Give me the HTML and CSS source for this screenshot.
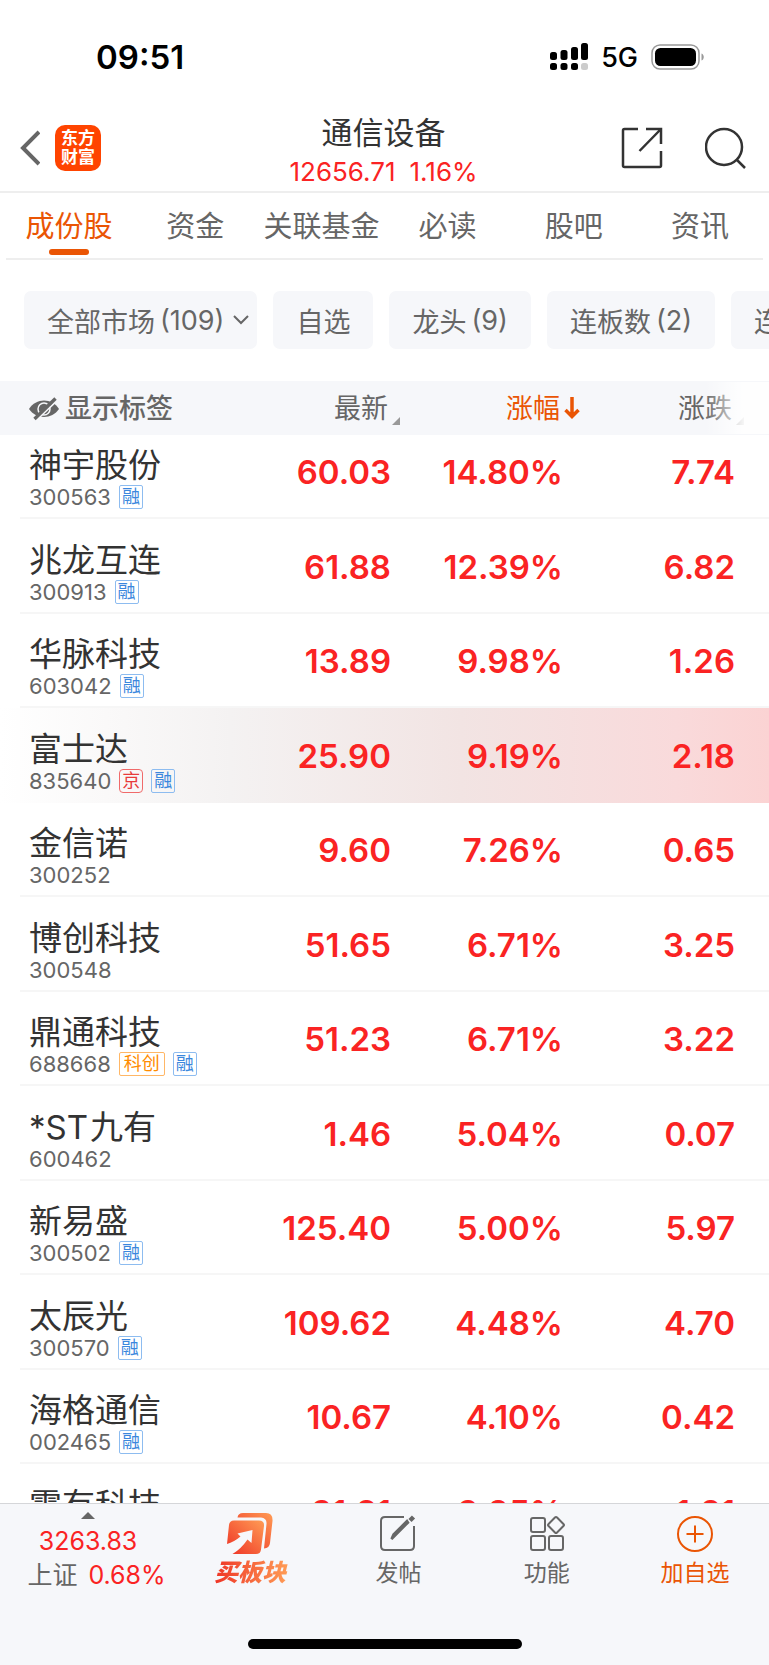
FILE: index.html
```html
<!DOCTYPE html>
<html lang="zh-CN">
<head>
    <meta charset="UTF-8">
    <meta name="viewport" content="width=device-width, initial-scale=1.0">
    <title>通信设备</title>
    <link rel="stylesheet" href="styles.css">
</head>
<body>
    <!-- Status bar -->
    <div class="status-bar">
        <span class="status-time">09:51</span>
        <div class="status-right">
            <svg width="38" height="28" viewBox="0 0 38 28">
                <rect x="0" y="9" width="7" height="8" rx="2.5"/>
                <rect x="10.500" y="7" width="7" height="10" rx="2.5"/>
                <rect x="21" y="4" width="7" height="13" rx="2.5"/>
                <rect x="31" y="0" width="7" height="17" rx="2.5"/>
                <rect x="0" y="20" width="7" height="7" rx="2.5"/>
                <rect x="10.500" y="20" width="7" height="7" rx="2.5"/>
                <rect x="21" y="20" width="7" height="7" rx="2.5"/>
                <rect x="31" y="20" width="7" height="7" rx="2.5" fill="#ccc"/>
            </svg>
            <span class="network">5G</span>
            <svg width="54" height="26" viewBox="0 0 54 26">
                <rect x="1" y="1" width="47" height="24" rx="8" fill="none" stroke="#999" stroke-width="1.500"/>
                <rect x="4" y="4" width="41" height="18" rx="5.500"/>
                <path d="M50.500 9.500c3 1 3 6 0 7z" fill="#999"/>
            </svg>
        </div>
    </div>

    <!-- Title bar -->
    <header class="header">
        <div class="header-left">
            <button class="icon-btn" aria-label="返回">
                <svg width="20" height="36" viewBox="0 0 20 36" fill="none" stroke="#666" stroke-width="4">
                    <path d="M19 2L3 18l16 16"/>
                </svg>
            </button>
            <a class="logo" href="#"><span>东方</span><span>财富</span></a>
        </div>
        <div class="header-title">
            <h1>通信设备</h1>
            <p><span>12656.71</span><span>1.16%</span></p>
        </div>
        <div class="header-right">
            <button class="icon-btn" aria-label="分享">
                <svg width="42" height="42" viewBox="0 0 42 42" fill="none" stroke="#333" stroke-width="2.500">
                    <path d="M17 2H3.500Q2 2 2 3.500V38.500Q2 40 3.500 40H38.500Q40 40 40 38.500V24M25 2H40V17M40 2L18.500 24"/>
                </svg>
            </button>
            <button class="icon-btn" aria-label="搜索">
                <svg width="42" height="42" viewBox="0 0 42 42" fill="none" stroke="#333" stroke-width="2.500">
                    <circle cx="19" cy="20" r="18"/>
                    <path d="M31.500 32.500L40 41"/>
                </svg>
            </button>
        </div>
    </header>

    <!-- Tabs -->
    <nav class="tabs">
        <a class="tab active" href="#">成份股</a>
        <a class="tab" href="#">资金</a>
        <a class="tab" href="#">关联基金</a>
        <a class="tab" href="#">必读</a>
        <a class="tab" href="#">股吧</a>
        <a class="tab" href="#">资讯</a>
    </nav>

    <!-- Filters -->
    <div class="filters">
        <button class="chip chip-menu">全部市场<span>(109)</span>
            <svg width="16" height="10" viewBox="0 0 16 10" fill="none" stroke="#666" stroke-width="2"><path d="M1 1l7 7 7-7"/></svg>
        </button>
        <button class="chip">自选</button>
        <button class="chip">龙头<span>(9)</span></button>
        <button class="chip">连板数<span>(2)</span></button>
        <button class="chip">连板</button>
    </div>

    <!-- Stock list -->
    <main class="list">
        <table class="stocks">
            <thead>
                <tr>
                    <th class="col-name">
                        <button class="label-toggle">
                            <svg width="30" height="24" viewBox="0 0 30 24">
                                <path d="M0 12C7 .5 23 .5 30 12C23 22.500 7 22.500 0 12z" fill="#666"/>
                                <circle cx="15" cy="12" r="6" fill="none" stroke="#f6f7fa" stroke-width="1.500"/>
                                <path d="M7 23.500L28 3.500" stroke="#f6f7fa" stroke-width="1.800"/>
                                <path d="M5.500 22L26.500 1.500" stroke="#666" stroke-width="3.400"/>
                            </svg>
                            显示标签
                        </button>
                    </th>
                    <th><button class="sort">最新<i class="corner"></i></button></th>
                    <th><button class="sort sorted">涨幅<svg class="arrow" width="16" height="24" viewBox="0 0 16 24" fill="none" stroke="#ea5504" stroke-width="3.500"><path d="M8 1v19M1.500 14L8 20.500 14.500 14"/></svg></button></th>
                    <th><button class="sort">涨跌<i class="corner"></i></button></th>
                </tr>
            </thead>
            <tbody>
                <tr>
                    <td><div class="name">神宇股份</div><div class="meta">300563 <span class="tag">融</span></div></td>
                    <td>60.03</td><td>14.80%</td><td>7.74</td>
                </tr>
                <tr>
                    <td><div class="name">兆龙互连</div><div class="meta">300913 <span class="tag">融</span></div></td>
                    <td>61.88</td><td>12.39%</td><td>6.82</td>
                </tr>
                <tr>
                    <td><div class="name">华脉科技</div><div class="meta">603042 <span class="tag">融</span></div></td>
                    <td>13.89</td><td>9.98%</td><td>1.26</td>
                </tr>
                <tr class="flash">
                    <td><div class="name">富士达</div><div class="meta">835640 <span class="tag tag-bj">京</span><span class="tag">融</span></div></td>
                    <td>25.90</td><td>9.19%</td><td>2.18</td>
                </tr>
                <tr>
                    <td><div class="name">金信诺</div><div class="meta">300252</div></td>
                    <td>9.60</td><td>7.26%</td><td>0.65</td>
                </tr>
                <tr>
                    <td><div class="name">博创科技</div><div class="meta">300548</div></td>
                    <td>51.65</td><td>6.71%</td><td>3.25</td>
                </tr>
                <tr>
                    <td><div class="name">鼎通科技</div><div class="meta">688668 <span class="tag tag-kc">科创</span><span class="tag">融</span></div></td>
                    <td>51.23</td><td>6.71%</td><td>3.22</td>
                </tr>
                <tr>
                    <td><div class="name"><span class="prefix">*ST</span>九有</div><div class="meta">600462</div></td>
                    <td>1.46</td><td>5.04%</td><td>0.07</td>
                </tr>
                <tr>
                    <td><div class="name">新易盛</div><div class="meta">300502 <span class="tag">融</span></div></td>
                    <td>125.40</td><td>5.00%</td><td>5.97</td>
                </tr>
                <tr>
                    <td><div class="name">太辰光</div><div class="meta">300570 <span class="tag">融</span></div></td>
                    <td>109.62</td><td>4.48%</td><td>4.70</td>
                </tr>
                <tr>
                    <td><div class="name">海格通信</div><div class="meta">002465 <span class="tag">融</span></div></td>
                    <td>10.67</td><td>4.10%</td><td>0.42</td>
                </tr>
                <tr>
                    <td><div class="name">震有科技</div><div class="meta"></div></td>
                    <td>31.81</td><td>3.95%</td><td>1.21</td>
                </tr>
            </tbody>
        </table>
    </main>

    <!-- Bottom bar -->
    <footer class="bottom-bar">
        <div class="actions">
            <button class="index">
                <i class="up"></i>
                <span class="red">3263.83</span>
                <span class="index-row">上证 <span class="red">0.68%</span></span>
            </button>
            <button class="action buy">
                <svg width="48" height="44" viewBox="0 0 48 44">
                    <defs>
                        <linearGradient id="fire" x1="0" y1="1" x2="1" y2="0">
                            <stop offset="0" stop-color="#ee3124"/>
                            <stop offset="1" stop-color="#ff9c55"/>
                        </linearGradient>
                    </defs>
                    <path d="M11.500 5.500Q12 1 17 1H40Q47 1 46.500 9L44 31Q43.500 36 38 36.500L40.500 12Q41 6 35 5.500z" fill="url(#fire)"/>
                    <path d="M3 13Q3.500 8.500 8 8.500H33Q38.500 8.500 38 14L35 37.500Q34.500 42 30 42H6.500Q15 37 21.500 27.500L25.500 31L26.500 18L11.500 21.500L14.500 24.500Q8 30 1 32z" fill="url(#fire)"/>
                </svg>
                <span>买板块</span>
            </button>
            <button class="action">
                <svg width="38" height="44" viewBox="0 0 38 44" fill="none" stroke="#666" stroke-width="2">
                    <path d="M25 5H6Q2 5 2 9V34Q2 38 6 38H31Q35 38 35 34V14"/>
                    <path d="M29 10.500L12.500 27 14.500 22.500 28 9z" fill="#666" stroke-width="2.500"/>
                    <path d="M31 8.500L34.500 5" stroke-width="4.500"/>
                </svg>
                <span>发帖</span>
            </button>
            <button class="action">
                <svg width="36" height="44" viewBox="0 0 36 44" fill="none" stroke="#666" stroke-width="2">
                    <rect x="2" y="6" width="14" height="14" rx="2"/>
                    <rect x="2" y="24" width="14" height="14" rx="2"/>
                    <rect x="20" y="24" width="14" height="14" rx="2"/>
                    <rect x="21" y="7" width="12" height="12" rx="1.500" transform="rotate(45 27 13)"/>
                </svg>
                <span>功能</span>
            </button>
            <button class="action add">
                <svg width="38" height="44" viewBox="0 0 38 44" fill="none" stroke="#ea5504" stroke-width="2">
                    <circle cx="19" cy="22" r="17"/>
                    <path d="M10.500 22h17M19 13.500v17"/>
                </svg>
                <span>加自选</span>
            </button>
        </div>
        <div class="home-indicator"></div>
    </footer>
</body>
</html>
```

FILE: styles.css
```css
/* Basic Styles */
* {
    box-sizing: border-box;
}

body {
    margin: 0;
    height: 100vh;
    display: flex;
    flex-direction: column;
    overflow: hidden;
    background-color: #fff;
    color: #666;
    font-family: Inter, "Noto Sans CJK SC", sans-serif;
}

button {
    padding: 0;
    border: none;
    background: none;
    color: inherit;
    font: inherit;
    cursor: pointer;
}

a {
    color: inherit;
    text-decoration: none;
}

svg {
    display: block;
}

/* Status Bar */
.status-bar {
    display: flex;
    justify-content: space-between;
    align-items: center;
    height: 114px;
    padding: 0 64px 0 96px;
    color: #000;
}

.status-time {
    font-size: 33px;
    font-weight: 600;
}

.status-right {
    display: flex;
    align-items: center;
    gap: 13px;
}

.network {
    font-size: 27px;
    font-weight: 500;
}

/* Title Bar */
.header {
    display: grid;
    grid-template-columns: 1fr auto 1fr;
    align-items: start;
    padding: 0 22px 0 20px;
    border-bottom: 2px solid #eee;
}

.header-left,
.header-right {
    display: flex;
    align-items: center;
    height: 67px;
}

.header-left {
    gap: 15px;
}

.header-right {
    justify-content: flex-end;
    gap: 42px;
}

.logo {
    display: flex;
    flex-direction: column;
    align-items: center;
    justify-content: center;
    width: 46px;
    height: 46px;
    border-radius: 10px;
    background-color: #ff4400;
    color: #fff;
    font-size: 17px;
    font-weight: 700;
    line-height: 19px;
}

.header-title {
    display: flex;
    flex-direction: column;
    align-items: center;
}

.header-title h1 {
    margin: 0;
    color: #333;
    font-size: 31px;
    font-weight: 400;
    line-height: 37px;
}

.header-title p {
    display: flex;
    gap: 14px;
    margin: 0;
    padding-top: 2px;
    color: #fa2323;
    font-size: 26px;
    line-height: 38px;
}

/* Tabs */
.tabs {
    display: flex;
    margin: 0 6px;
    border-bottom: 2px solid #eee;
}

.tab {
    flex: 1;
    position: relative;
    padding-top: 2px;
    font-size: 29px;
    line-height: 63px;
    text-align: center;
    white-space: nowrap;
}

.tab.active {
    color: #ea5504;
}

.tab.active::after {
    content: "";
    position: absolute;
    left: 50%;
    bottom: 3px;
    width: 40px;
    height: 6px;
    border-radius: 3px;
    background-color: #ea5504;
    transform: translateX(-50%);
}

/* Filters */
.filters {
    display: flex;
    gap: 16px;
    padding: 31px 24px 32px;
    overflow: hidden;
}

.chip {
    display: flex;
    flex: none;
    align-items: center;
    gap: 5px;
    height: 58px;
    padding: 0 23px;
    border-radius: 7px;
    background-color: #f6f7fa;
    font-size: 27px;
    white-space: nowrap;
}

.chip-menu {
    padding-right: 8px;
}

.chip-menu svg {
    margin-left: 4px;
}

/* Stock List */
.list {
    flex: 1;
    min-height: 0;
    overflow: hidden;
    position: relative;
}

.list::after {
    content: "";
    position: absolute;
    top: 1px;
    right: 0;
    width: 64px;
    height: 52px;
    background: linear-gradient(to right, rgba(255, 255, 255, 0), #fff 60%);
    opacity: 0.9;
}

.stocks {
    width: 100%;
    table-layout: fixed;
    border-spacing: 0;
}

.stocks th {
    width: 172px;
    height: 54px;
    padding: 1px 37px 0 0;
    background-color: #f6f7fa;
    font-size: 27px;
    font-weight: 400;
    line-height: 53px;
    text-align: right;
}

.stocks .col-name {
    width: auto;
    padding: 1px 0 0 29px;
    text-align: left;
}

.label-toggle {
    display: flex;
    align-items: center;
    gap: 6px;
    font-weight: 500;
}

.sort {
    position: relative;
}

.sorted {
    color: #ea5504;
}

.corner {
    position: absolute;
    right: -12px;
    bottom: 10px;
    border-left: 8px solid transparent;
    border-bottom: 8px solid #999;
}

.arrow {
    position: absolute;
    top: 14px;
    right: -20px;
}

.stocks tbody tr {
    height: 94px;
    background: linear-gradient(#f6f6f6, #f6f6f6) 20px 100% / 100% 2px no-repeat;
}

.stocks tbody tr:nth-child(even) {
    height: 95px;
}

.stocks tbody tr:first-child {
    height: 84px;
}

.stocks tbody .flash {
    background: linear-gradient(to right, #fff, #f4f2f2 30%, #f2e4e3 60%, #f9dadb 88%, #fbd3d3);
}

.stocks td {
    padding: 0 34px 27px 0;
    color: #fa2323;
    font-size: 33px;
    font-weight: 600;
    line-height: 40px;
    text-align: right;
    vertical-align: bottom;
}

.stocks td:first-child {
    padding: 0 0 10px 29px;
    font-weight: 400;
    text-align: left;
}

.name {
    color: #333;
    white-space: nowrap;
}

.prefix {
    margin-right: 2px;
}

.meta {
    display: flex;
    align-items: center;
    gap: 8px;
    height: 24px;
    color: #666;
    font-size: 22px;
}

.tag {
    height: 24px;
    padding: 0 2px;
    border: 1px solid #8dbcf0;
    border-radius: 2px;
    color: #3b87dd;
    font-size: 18px;
    line-height: 22px;
}

.tag-bj {
    border-color: #f06a6a;
    border-radius: 4px;
    color: #e83b3b;
}

.tag-kc {
    padding: 0 4px;
    border-color: #ffb766;
    color: #ff8c00;
}

/* Bottom Bar */
.bottom-bar {
    height: 162px;
    border-top: 1px solid #d5d6d9;
    background-color: #f6f7fa;
}

.actions {
    display: flex;
    height: 135px;
}

.index {
    display: flex;
    flex: 0 0 176px;
    flex-direction: column;
    align-items: center;
    padding-top: 8px;
    font-size: 25px;
    line-height: 34px;
}

.index-row {
    display: flex;
    gap: 11px;
    padding-left: 17px;
}

.up {
    margin-bottom: 5px;
    border-left: 7px solid transparent;
    border-right: 7px solid transparent;
    border-bottom: 7px solid #666;
}

.red {
    color: #fa2323;
}

.action {
    display: flex;
    flex: 1;
    flex-direction: column;
    align-items: center;
    padding-top: 8px;
    font-size: 23px;
    line-height: 34px;
}

.add {
    color: #ea5504;
}

.buy span {
    padding: 0 2px;
    background: linear-gradient(to right, #ee3124, #ff9c55);
    background-clip: text;
    color: transparent;
    font-size: 24px;
    font-style: italic;
    font-weight: 900;
}

.home-indicator {
    width: 274px;
    height: 10px;
    margin: 0 auto;
    border-radius: 5px;
    background-color: #000;
}
```
